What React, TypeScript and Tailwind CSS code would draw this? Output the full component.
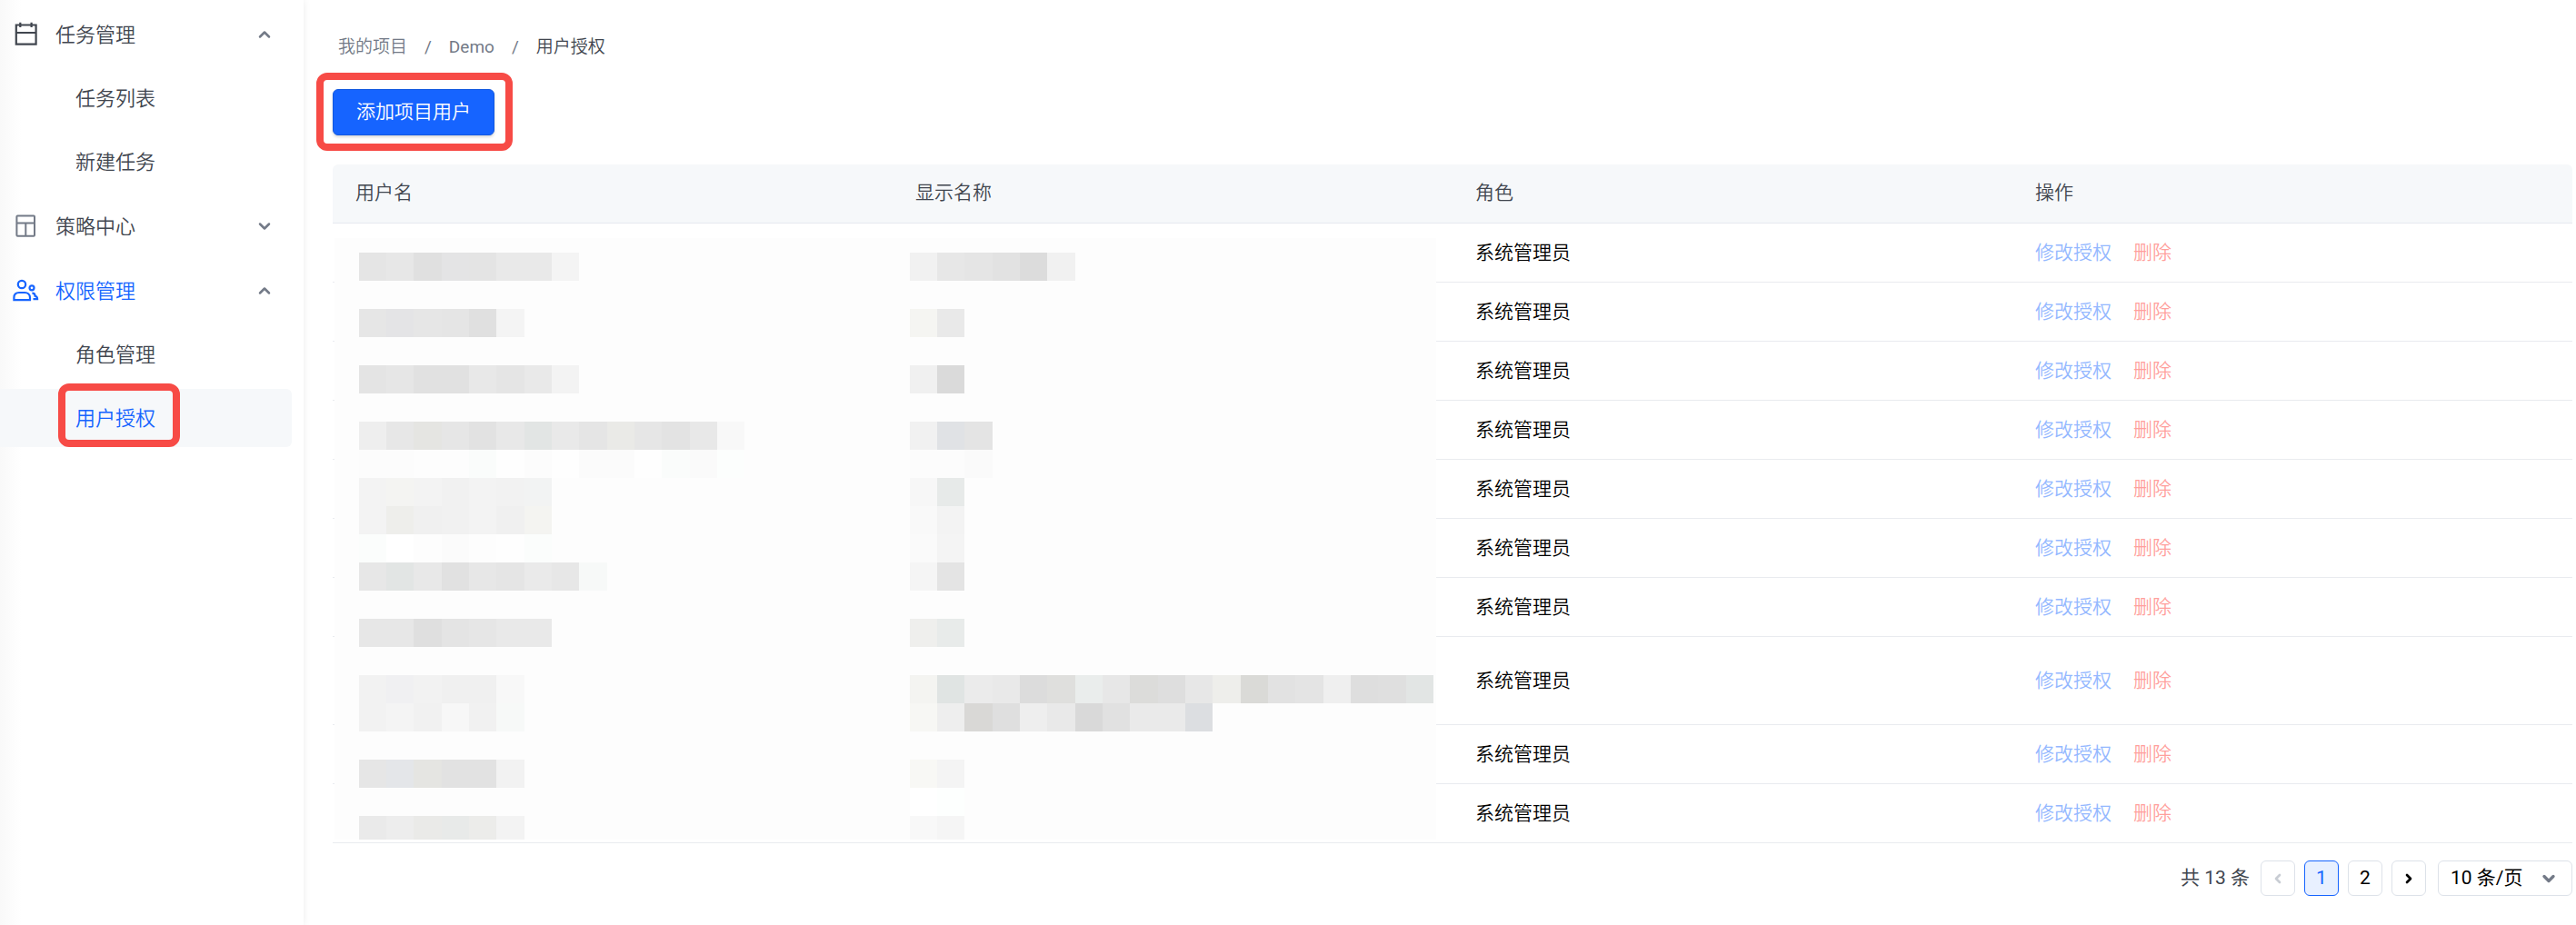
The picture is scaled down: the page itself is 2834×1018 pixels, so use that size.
import React, { useState } from 'react';
import { ChevronDown, ChevronUp, ChevronLeft, ChevronRight } from 'lucide-react';

// masked cell blocks: top offset is measured from the top of the table body
const nameMasks = [
  { top: 32, left: 29, cells: [['#e5e5e5', '#e7e7e7', '#e0e0e0', '#e4e4e5', '#e4e4e4', '#e9e9e9', '#e9e9e9', '#f4f4f4']] },
  { top: 94, left: 29, cells: [['#e6e6e6', '#e4e4e6', '#e6e6e6', '#e5e5e5', '#e0e0e0', '#f4f4f4']] },
  { top: 156, left: 29, cells: [['#e4e4e4', '#e6e6e6', '#e1e1e1', '#e1e1e1', '#e8e8e8', '#e5e5e5', '#e9e9e9', '#f3f3f3']] },
  {
    top: 218, left: 29, cells: [
      ['#eeeeee', '#e7e7e7', '#e5e5e2', '#e6e6e6', '#e2e2e2', '#e8e8e8', '#e2e5e4', '#e9e9e9', '#e5e5e5', '#eaeae7', '#e6e6e6', '#e3e3e3', '#e8e8e8', '#f8f8f8'],
      ['#fcfcfc', '#fcfcfc', '#fdfdfd', '#fdfdfd', '#fafcfb', '#fefefe', '#fcfcfc', '#fefefe', '#fbfbfb', '#fbfbfb', '#fefefe', '#fafcfb', '#fafafa', '#fcfefd'],
      ['#f3f3f3', '#f4f4f2', '#f3f3f3', '#f1f1f1', '#f3f3f3', '#f2f2f2', '#f2f3f3'],
      ['#f3f3f3', '#eeeeeb', '#f0f0f0', '#f1f1f1', '#f3f3f3', '#f0f0f0', '#f4f4f1'],
      ['#fbfdfc', '#ffffff', '#fdfdfd', '#fbfbfb', '#fdfdfd', '#fefefe', '#fbfdfc'],
      ['#e7e7e7', '#e2e5e4', '#e8e8e8', '#e1e1e1', '#e7e7e7', '#e5e5e5', '#eaeaea', '#e7e7e7', '#f7f9f8'],
    ],
  },
  { top: 435, left: 29, cells: [['#e7e7e7', '#e7e7e7', '#dfdfdf', '#e4e4e4', '#e6e6e6', '#e9e9e9', '#e9e9e9']] },
  {
    top: 497, left: 29, cells: [
      ['#f2f2f2', '#f0f0f2', '#f2f2f2', '#f0f0f0', '#f0f0f0', '#f8f8f8'],
      ['#f2f2f2', '#f4f4f4', '#f1f1f1', '#f7f7f7', '#f1f1f1', '#f7f9f8'],
    ],
  },
  { top: 590, left: 29, cells: [['#e6e6e6', '#e4e6e9', '#e5e5e2', '#e2e2e2', '#e2e2e2', '#f2f2f2']] },
  { top: 652, left: 29, cells: [['#eaeaea', '#ededed', '#eaeae8', '#e8eae9', '#ececea', '#f3f3f3']] },
];

const displayMasks = [
  { top: 32, left: 635, cells: [['#f1f1f1', '#e7e7e7', '#e5e5e5', '#e2e2e2', '#dcdcdc', '#f1f1f1']] },
  { top: 94, left: 635, cells: [['#f5f5f2', '#e9e9e9']] },
  { top: 156, left: 635, cells: [['#f0f0f0', '#dadada']] },
  {
    top: 218, left: 635, cells: [
      ['#f1f1f1', '#e0e2e5', '#e4e4e4'],
      ['#fcfcfc', '#fcfcfc', '#fafafa'],
      ['#f7f7f7', '#e7eae9'],
      ['#f9f9f9', '#f3f3f3'],
      ['#fafafa', '#f4f4f4'],
      ['#f5f5f5', '#e4e4e4'],
    ],
  },
  { top: 435, left: 635, cells: [['#efefed', '#e8ebea']] },
  {
    top: 497, left: 635, cells: [
      ['#f4f4f1', '#e0e4e3', '#ebebeb', '#e9e9e9', '#dcdcdc', '#dfdfdd', '#eaedec', '#e7e7e7', '#dcdcda', '#dedede', '#e7e7e7', '#eeeeeb', '#dadad7', '#e2e2e2', '#e4e4e4', '#efefef', '#dedede', '#dfdfdf', '#e2e5e4'],
      ['#f7f7f4', '#eeeeee', '#d9d8d6', '#dfdfdf', '#eeeeee', '#e9e9e9', '#d9d9d9', '#e1e1e1', '#eaeaea', '#eaeaea', '#dcdee1'],
    ],
  },
  { top: 590, left: 635, cells: [['#f8f8f5', '#f4f4f4'], ['#ffffff', '#fdfffe']] },
  { top: 652, left: 635, cells: [['#f8f8f8', '#f5f5f5']] },
];

const users = Array.from({ length: 10 }, (_, i) => ({ id: i, role: '系统管理员', tall: i === 7 }));

function CalendarIcon() {
  return (
    <svg className="w-7 h-7" viewBox="0 0 28 28" fill="none" stroke="currentColor" strokeWidth="2.2">
      <path d="M3.800 3.500h21.800v21.200H3.800zM3.800 12h21.800M8.300 .8v5.200M20.600 .8v5.200" />
    </svg>
  );
}

function LayoutIcon() {
  return (
    <svg className="w-7 h-7 text-[#737a87]" viewBox="0 0 28 28" fill="none" stroke="currentColor" strokeWidth="2">
      <rect x="4.400" y="2.500" width="19.600" height="22.200" rx="1" />
      <path d="M4.400 10.600h19.600M14.300 10.600v14" />
    </svg>
  );
}

function UsersIcon() {
  return (
    <svg className="w-7 h-7 overflow-visible" viewBox="0 0 28 28" fill="none" stroke="currentColor" strokeWidth="2.2">
      <circle cx="10" cy="7" r="4.200" />
      <path d="M1.400 24.200v-2.600c0-3.400 2.200-5.600 5.600-5.600h6.200c3.400 0 5.800 2.200 5.800 5.600v2.600z" />
      <circle cx="21" cy="10.800" r="2.500" />
      <path d="M21.400 16.600c2.600 0 3.200 1 3.200 3.200 1.600.4 2.500 1.400 2.500 3.400h-4.600" />
    </svg>
  );
}

function MenuGroup({ icon, label, open, active = false, children }: { icon: React.ReactNode; label: string; open: boolean; active?: boolean; children?: React.ReactNode }) {
  return (
    <li className="flex flex-col gap-1.5">
      <button type="button" aria-expanded={open} className={`h-16 w-full pl-3.5 pr-5 flex items-center text-left ${active ? 'text-[#1664ff]' : 'text-[#41464f]'}`}>
        {icon}
        <span className="ml-[19px] flex-1">{label}</span>
        {open ? <ChevronUp className="w-5 h-5 text-[#737a87]" strokeWidth={3} /> : <ChevronDown className="w-5 h-5 text-[#737a87]" strokeWidth={3} />}
      </button>
      {children && <ul className="flex flex-col gap-1.5">{children}</ul>}
    </li>
  );
}

function MenuItem({ label, active = false }: { label: string; active?: boolean }) {
  return (
    <li>
      <a href="#" className={`relative h-16 pl-[83px] flex items-center rounded-r-md ${active ? 'bg-[#f6f8fa] text-[#1664ff]' : 'text-[#41464f]'}`}>
        {label}
        {active && <span className="absolute left-16 -top-1.5 w-[134px] h-[70px] rounded-xl border-8 border-[#f74b46]" />}
      </a>
    </li>
  );
}

function Mosaic({ masks }: { masks: { top: number; left: number; cells: string[][] }[] }) {
  return (
    <>
      {masks.map(m => (
        <div key={m.top} className="absolute" style={{ top: m.top, left: m.left }}>
          {m.cells.map((row, r) => (
            <div key={r} className="flex">
              {row.map((c, i) => <span key={i} className={`h-[31px] ${i % 3 === 2 ? 'w-[31px]' : 'w-[30px]'}`} style={{ background: c }} />)}
            </div>
          ))}
        </div>
      ))}
    </>
  );
}

export default function App() {
  const [page, setPage] = useState(1);
  const [pageSize, setPageSize] = useState('10');

  return (
    <div className="min-h-screen flex bg-white text-[21px] text-black font-[Roboto,'Noto_Sans_CJK_SC',sans-serif] font-[350]">
      <nav className="w-[334px] shrink-0 pt-1.5 pr-[13px] text-[22px] bg-linear-to-r from-[#f9f9f9] to-white to-[24px] shadow-[0_0_8px_rgba(0,0,0,0.08)]">
        <ul className="flex flex-col gap-[7px]">
          <MenuGroup icon={<CalendarIcon />} label="任务管理" open>
            <MenuItem label="任务列表" />
            <MenuItem label="新建任务" />
          </MenuGroup>
          <MenuGroup icon={<LayoutIcon />} label="策略中心" open={false} />
          <MenuGroup icon={<UsersIcon />} label="权限管理" open active>
            <MenuItem label="角色管理" />
            <MenuItem label="用户授权" active />
          </MenuGroup>
        </ul>
      </nav>

      <main className="flex-1 min-w-0 pl-8 pr-1 pt-9">
        <nav className="h-8 pl-1.5 flex items-center gap-[19px] text-[19px] text-[#737a87]">
          <a href="#">我的项目</a>
          <span className="font-normal">/</span>
          <a href="#" className="font-normal">Demo</a>
          <span className="font-normal">/</span>
          <span className="text-[#41464f]">用户授权</span>
        </nav>

        <div className="relative mt-[30px] w-fit">
          <button type="button" className="block h-[51px] w-[178px] rounded-md border border-[#1259e0] bg-[#1664ff] text-white shadow-[0_2px_3px_rgba(0,0,0,0.15)]">添加项目用户</button>
          <span className="absolute -left-[18px] -top-[18px] w-[216px] h-[86px] rounded-xl border-8 border-[#f74b46]" />
        </div>

        <div className="relative mt-8">
          <table className="w-full table-fixed border-separate border-spacing-0 text-left">
            <thead>
              <tr className="h-[65px] text-[#41464f]">
                <th className="px-[25px] bg-[#f6f8fa] border-b border-[#e6e9f0] font-[350] rounded-tl-md">用户名</th>
                <th className="px-[25px] bg-[#f6f8fa] border-b border-[#e6e9f0] font-[350]">显示名称</th>
                <th className="px-[25px] bg-[#f6f8fa] border-b border-[#e6e9f0] font-[350]">角色</th>
                <th className="px-[25px] bg-[#f6f8fa] border-b border-[#e6e9f0] font-[350] rounded-tr-md">操作</th>
              </tr>
            </thead>
            <tbody>
              {users.map(u => (
                <tr key={u.id} className={u.tall ? 'h-[97px]' : 'h-[65px]'}>
                  <td className="border-b border-[#e9ebef]" />
                  <td className="border-b border-[#e9ebef]" />
                  <td className="px-[25px] pt-0.5 border-b border-[#e9ebef]">{u.role}</td>
                  <td className="px-[25px] pt-0.5 border-b border-[#e9ebef]">
                    <a href="#" className="text-[#94b8ff]">修改授权</a>
                    <a href="#" className="ml-6 text-[#ff9f9c]">删除</a>
                  </td>
                </tr>
              ))}
            </tbody>
          </table>

          {/* privacy mask over the two name columns */}
          <div className="absolute left-0.5 top-[81px] bottom-1 w-[1212px] bg-[#fdfdfd] overflow-hidden">
            <div className="absolute -left-0.5 -top-4">
              <Mosaic masks={nameMasks} />
              <Mosaic masks={displayMasks} />
            </div>
          </div>
        </div>

        <div className="mt-[19px] flex items-center justify-end gap-2.5 font-normal">
          <span className="mr-0.5 text-[#41464f]">共 13 条</span>
          <button type="button" disabled aria-label="上一页" className="w-[38px] h-[39px] flex items-center justify-center rounded-md border border-[#dde2e9] text-[#c9cdd4]"><ChevronLeft className="w-4 h-4" strokeWidth={4} /></button>
          {[1, 2].map(p => (
            <button key={p} type="button" onClick={() => setPage(p)} className={`w-[38px] h-[39px] flex items-center justify-center rounded-md border ${page === p ? 'border-[#1664ff] bg-[#e8f0ff] text-[#1664ff]' : 'border-[#dde2e9]'}`}>{p}</button>
          ))}
          <button type="button" aria-label="下一页" className="w-[38px] h-[39px] flex items-center justify-center rounded-md border border-[#dde2e9]"><ChevronRight className="w-4 h-4" strokeWidth={4} /></button>
          <div className="relative ml-[3px]">
            <select aria-label="每页条数" value={pageSize} onChange={e => setPageSize(e.target.value)} className="block appearance-none w-[148px] h-[39px] pl-[13px] rounded-md border border-[#dde2e9] bg-white">
              <option value="10">10 条/页</option>
              <option value="20">20 条/页</option>
            </select>
            <ChevronDown className="absolute right-4 top-2.5 w-5 h-5 text-[#737a87] pointer-events-none" strokeWidth={4} />
          </div>
        </div>
      </main>
    </div>
  );
}
